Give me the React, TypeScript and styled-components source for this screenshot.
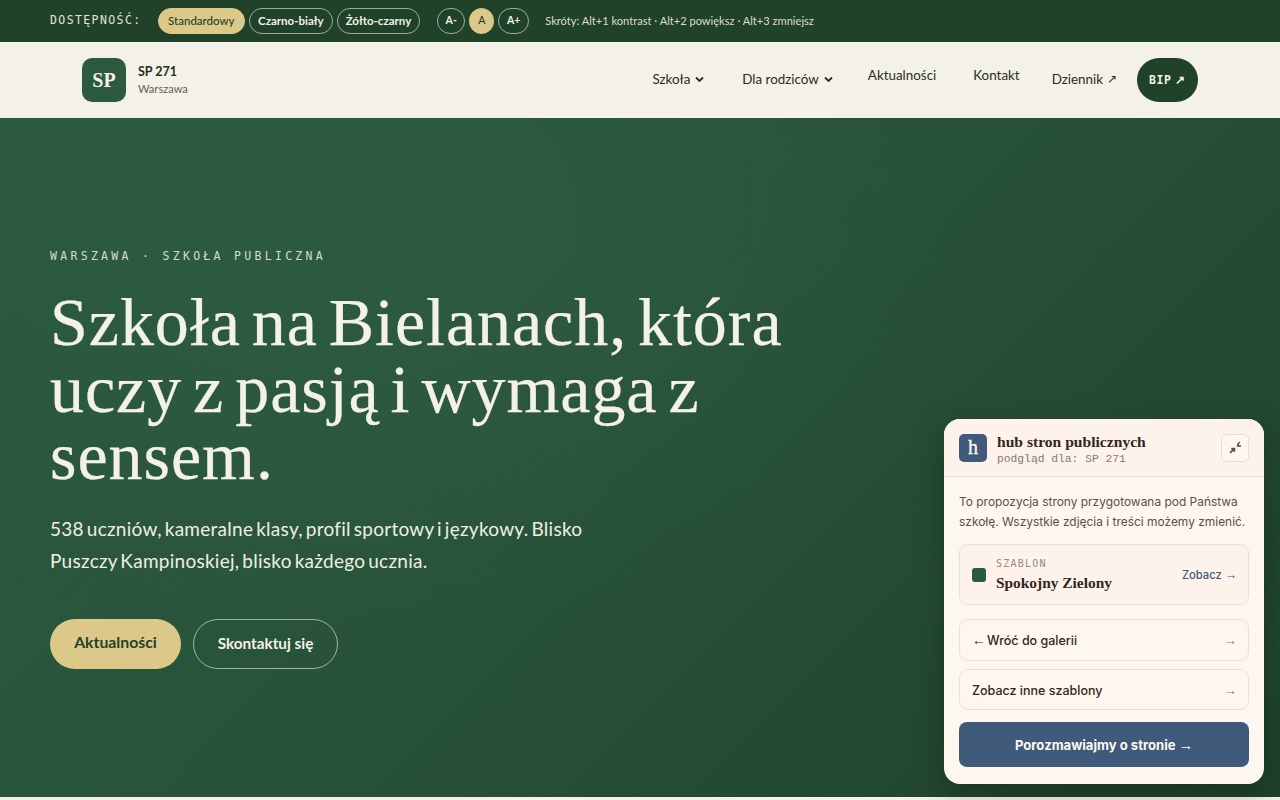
import styled, { createGlobalStyle } from "styled-components";

const sans = `"Lato", "Noto Sans", sans-serif`;
const serif = `"Liberation Serif", "DejaVu Serif", serif`;
const mono = `"DejaVu Sans Mono", "Liberation Mono", monospace`;
const plainMono = `"Liberation Mono", monospace`;

const GlobalStyle = createGlobalStyle`
  html, body {
    margin: 0;
    padding: 0;
    height: 800px;
    overflow: hidden;
    background: #f4f1e8;
    font-family: ${sans};
  }
  * {
    box-sizing: border-box;
  }
`;

const Page = styled.div`
  position: relative;
  width: 1280px;
  height: 800px;
  overflow: hidden;
`;

const AccessBar = styled.div`
  height: 42px;
  background: #1f4229;
  padding: 0 50px;
  display: flex;
  align-items: center;
`;

const AccessLabel = styled.span`
  font-family: ${mono};
  font-size: 11.5px;
  letter-spacing: 1.4px;
  color: #e6e3d3;
  margin-right: 16px;
  padding-bottom: 2px;
`;

const Pill = styled.button<{ $active?: boolean }>`
  height: 26px;
  padding: 0 ${(p) => (p.$active ? "9.5px" : "8px")} 2px;
  margin-right: 4px;
  border-radius: 13px;
  border: 1px solid ${(p) => (p.$active ? "#dcc98a" : "rgba(244, 241, 232, 0.6)")};
  background: ${(p) => (p.$active ? "#dcc98a" : "transparent")};
  color: ${(p) => (p.$active ? "#1f4229" : "#f4f1e8")};
  font-family: ${sans};
  font-size: 11.5px;
  font-weight: ${(p) => (p.$active ? 500 : 700)};
  white-space: nowrap;
`;

const SizeGroup = styled.div`
  display: flex;
  gap: 4px;
  margin-left: 13px;
  margin-right: 16px;
`;

const SizeButton = styled(Pill)<{ $width: number }>`
  margin: 0;
  padding: 0 0 2px;
  width: ${(p) => p.$width}px;
  font-size: 10.5px;
`;

const Shortcuts = styled.span`
  font-size: 11.1px;
  color: #dedbcb;
  white-space: nowrap;
  padding-bottom: 2px;
`;

const NavBar = styled.header`
  height: 76px;
  background: #f4f1e8;
  padding: 0 82px;
  display: flex;
  align-items: center;
  justify-content: space-between;
`;

const Brand = styled.div`
  display: flex;
  align-items: center;
  gap: 12px;
`;

const BrandMark = styled.div`
  width: 44px;
  height: 44px;
  border-radius: 10px;
  background: #2b5a3e;
  color: #f4f1e8;
  display: flex;
  align-items: center;
  justify-content: center;
  font-family: ${serif};
  font-weight: 700;
  font-size: 20px;
`;

const BrandText = styled.div`
  display: flex;
  flex-direction: column;
  gap: 3px;
  padding-bottom: 2px;
`;

const BrandName = styled.span`
  font-size: 12.5px;
  font-weight: 700;
  color: #22301f;
`;

const BrandCity = styled.span`
  font-size: 11.1px;
  color: #5c5f54;
`;

const Menu = styled.nav`
  display: flex;
  align-items: center;
`;

const MenuItem = styled.a<{ $gap: number; $raised?: boolean }>`
  display: inline-flex;
  align-items: center;
  gap: 5px;
  margin-right: ${(p) => p.$gap}px;
  margin-bottom: ${(p) => (p.$raised ? "10px" : "2px")};
  font-size: 13.4px;
  color: #26301f;
  white-space: nowrap;
`;

const OutArrow = styled.span`
  font-family: "Liberation Sans", sans-serif;
  font-size: 12px;
  margin-left: -1px;
`;

const BipButton = styled.a`
  width: 61px;
  height: 44px;
  padding-bottom: 1px;
  border-radius: 22px;
  background: #1f4229;
  color: #f0f3e2;
  display: flex;
  align-items: center;
  justify-content: center;
  gap: 5px;
  font-family: ${mono};
  font-size: 11.5px;
  font-weight: 700;
  letter-spacing: 0.5px;
  white-space: nowrap;
`;

const Hero = styled.section`
  height: 679px;
  padding: 131px 50px 0;
  background:
    radial-gradient(ellipse 620px 420px at 330px 100px, #2d5b41 0%, rgba(46, 92, 66, 0) 100%),
    linear-gradient(135deg, #2a5a3e 0%, #28533a 45%, #1f4229 100%);
`;

const Eyebrow = styled.div`
  font-family: ${mono};
  font-size: 11.5px;
  letter-spacing: 3.3px;
  color: #d6dcc6;
`;

const Title = styled.h1`
  margin: 26px 0 0;
  width: 800px;
  font-family: ${serif};
  font-weight: 400;
  font-size: 68px;
  line-height: 67px;
  letter-spacing: 0.95px;
  word-spacing: -7px;
  -webkit-text-stroke: 0.25px #f4f1e8;
  color: #f4f1e8;
`;

const Lead = styled.p`
  margin: 23px 0 0;
  width: 600px;
  font-size: 19px;
  line-height: 32px;
  letter-spacing: 0.27px;
  word-spacing: -2.2px;
  color: #f1eee2;
`;

const Actions = styled.div`
  display: flex;
  gap: 12px;
  margin-top: 42px;
`;

const PrimaryAction = styled.a`
  width: 131px;
  height: 50px;
  border-radius: 25px;
  background: #dcc98a;
  color: #1f4229;
  display: flex;
  align-items: center;
  justify-content: center;
  font-size: 15.8px;
  font-weight: 700;
  padding-bottom: 5px;
`;

const SecondaryAction = styled.a`
  width: 145px;
  height: 50px;
  padding-bottom: 2px;
  border-radius: 25px;
  border: 1px solid rgba(244, 241, 232, 0.6);
  color: #f4f1e8;
  display: flex;
  align-items: center;
  justify-content: center;
  font-size: 15.3px;
  font-weight: 700;
`;

const HubCard = styled.aside`
  position: absolute;
  left: 944px;
  top: 419px;
  width: 320px;
  height: 365px;
  border-radius: 16px;
  background: #fef7ef;
  box-shadow: 0 10px 30px rgba(0, 0, 0, 0.25);
  font-family: "Inter", sans-serif;
`;

const HubHeader = styled.div`
  height: 58px;
  padding: 0 15px;
  border-bottom: 1px solid #ecdfd2;
  background: #fdf3ea;
  border-radius: 16px 16px 0 0;
  display: flex;
  align-items: center;
  gap: 10px;
`;

const HubLogo = styled.div`
  width: 28px;
  height: 28px;
  border-radius: 5px;
  background: #3f5a7a;
  color: #fef7ef;
  display: flex;
  align-items: center;
  justify-content: center;
  font-family: ${serif};
  font-size: 20px;
  -webkit-text-stroke: 0.3px #fef7ef;
`;

const HubTitleBlock = styled.div`
  flex: 1;
  display: flex;
  flex-direction: column;
  gap: 2px;
  padding-top: 2px;
`;

const HubTitle = styled.span`
  font-family: ${serif};
  font-weight: 700;
  font-size: 15.6px;
  color: #33261f;
`;

const HubSubtitle = styled.span`
  font-family: ${plainMono};
  font-size: 11.3px;
  color: #85796e;
`;

const CollapseButton = styled.button`
  width: 28px;
  height: 28px;
  padding: 0;
  border-radius: 5px;
  border: 1px solid #ecdfd2;
  background: #fef7ef;
  display: flex;
  align-items: center;
  justify-content: center;
`;

const HubBody = styled.div`
  padding: 15px;
`;

const HubNote = styled.p`
  margin: 0 0 12px;
  font-size: 11.95px;
  line-height: 20px;
  color: #5e5047;
`;

const TemplateBox = styled.div`
  height: 61px;
  padding: 0 12px;
  border: 1px solid #ecdfd2;
  border-radius: 9px;
  background: #fdf3ea;
  display: flex;
  align-items: center;
  gap: 10px;
  margin-bottom: 14px;
`;

const Swatch = styled.div`
  width: 14px;
  height: 14px;
  border-radius: 3px;
  background: #2b5a3e;
`;

const TemplateText = styled.div`
  flex: 1;
  display: flex;
  flex-direction: column;
  gap: 5px;
`;

const TemplateLabel = styled.span`
  font-family: ${mono};
  font-size: 10px;
  letter-spacing: 1.25px;
  color: #998b7f;
`;

const TemplateName = styled.span`
  font-family: ${serif};
  font-weight: 700;
  font-size: 15.4px;
  color: #33261f;
`;

const TemplateLink = styled.a`
  font-size: 11.2px;
  font-weight: 500;
  color: #3f5a7a;
  padding-top: 1px;
  margin-right: -1px;
`;

const Arrow = styled.span`
  font-family: "Liberation Sans", sans-serif;
  font-size: 1.1em;
`;

const BackArrow = styled(Arrow)`
  margin-right: -2px;
`;

const HubLink = styled.a<{ $height: number }>`
  height: ${(p) => p.$height}px;
  padding: 0 11px 0 12px;
  margin-bottom: 8px;
  border: 1px solid #ecdfd2;
  border-radius: 9px;
  display: flex;
  align-items: center;
  justify-content: space-between;
  font-size: 12.5px;
  font-weight: 500;
  color: #33261f;
`;

const OtherTemplatesLink = styled(HubLink)`
  padding-top: 2px;
`;

const LinkArrow = styled(Arrow)`
  color: #85796e;
`;

const TalkButton = styled.a`
  height: 45px;
  margin-top: 12px;
  border-radius: 8px;
  background: #3f5a7a;
  color: #fef7ef;
  display: flex;
  align-items: center;
  justify-content: center;
  font-size: 13.1px;
  font-weight: 700;
`;

const Chevron = () => (
  <svg width="9" height="7" viewBox="0 0 9 7" fill="none" stroke="#26301f" strokeWidth="1.8">
    <path d="M1 1.5 L4.5 5 L8 1.5" />
  </svg>
);

const CollapseIcon = () => (
  <svg width="15" height="15" viewBox="0 0 14 14" fill="none" stroke="#5e5047" strokeWidth="1.6">
    <path d="M2 12 L6 8 M3 8 H6 V11" />
    <path d="M11 2 C9.5 3 9 4 9 5.5 H12" />
  </svg>
);

const App = () => {
  return (
    <Page>
      <GlobalStyle />
      <AccessBar>
        <AccessLabel>DOSTĘPNOŚĆ:</AccessLabel>
        <Pill $active>Standardowy</Pill>
        <Pill>Czarno-biały</Pill>
        <Pill>Żółto-czarny</Pill>
        <SizeGroup>
          <SizeButton $width={28}>A-</SizeButton>
          <SizeButton $width={25} $active>
            A
          </SizeButton>
          <SizeButton $width={31}>A+</SizeButton>
        </SizeGroup>
        <Shortcuts>Skróty: Alt+1 kontrast · Alt+2 powiększ · Alt+3 zmniejsz</Shortcuts>
      </AccessBar>

      <NavBar>
        <Brand>
          <BrandMark>SP</BrandMark>
          <BrandText>
            <BrandName>SP 271</BrandName>
            <BrandCity>Warszawa</BrandCity>
          </BrandText>
        </Brand>
        <Menu>
          <MenuItem $gap={38}>
            Szkoła <Chevron />
          </MenuItem>
          <MenuItem $gap={35}>
            Dla rodziców <Chevron />
          </MenuItem>
          <MenuItem $gap={37} $raised>
            Aktualności
          </MenuItem>
          <MenuItem $gap={32} $raised>
            Kontakt
          </MenuItem>
          <MenuItem $gap={20}>
            Dziennik <OutArrow>↗</OutArrow>
          </MenuItem>
          <BipButton>
            BIP <OutArrow>↗</OutArrow>
          </BipButton>
        </Menu>
      </NavBar>

      <Hero>
        <Eyebrow>WARSZAWA · SZKOŁA PUBLICZNA</Eyebrow>
        <Title>Szkoła na Bielanach, która uczy z pasją i wymaga z sensem.</Title>
        <Lead>
          538 uczniów, kameralne klasy, profil sportowy i językowy. Blisko Puszczy Kampinoskiej,
          blisko każdego ucznia.
        </Lead>
        <Actions>
          <PrimaryAction>Aktualności</PrimaryAction>
          <SecondaryAction>Skontaktuj się</SecondaryAction>
        </Actions>
      </Hero>

      <HubCard>
        <HubHeader>
          <HubLogo>h</HubLogo>
          <HubTitleBlock>
            <HubTitle>hub stron publicznych</HubTitle>
            <HubSubtitle>podgląd dla: SP 271</HubSubtitle>
          </HubTitleBlock>
          <CollapseButton>
            <CollapseIcon />
          </CollapseButton>
        </HubHeader>
        <HubBody>
          <HubNote>
            To propozycja strony przygotowana pod Państwa szkołę. Wszystkie zdjęcia i treści możemy
            zmienić.
          </HubNote>
          <TemplateBox>
            <Swatch />
            <TemplateText>
              <TemplateLabel>SZABLON</TemplateLabel>
              <TemplateName>Spokojny Zielony</TemplateName>
            </TemplateText>
            <TemplateLink>
              Zobacz <Arrow>→</Arrow>
            </TemplateLink>
          </TemplateBox>
          <HubLink $height={42}>
            <span>
              <BackArrow>←</BackArrow> Wróć do galerii
            </span>
            <LinkArrow>→</LinkArrow>
          </HubLink>
          <OtherTemplatesLink $height={41}>
            Zobacz inne szablony <LinkArrow>→</LinkArrow>
          </OtherTemplatesLink>
          <TalkButton>
            <span>
              Porozmawiajmy o stronie <Arrow>→</Arrow>
            </span>
          </TalkButton>
        </HubBody>
      </HubCard>
    </Page>
  );
};

export default App;
